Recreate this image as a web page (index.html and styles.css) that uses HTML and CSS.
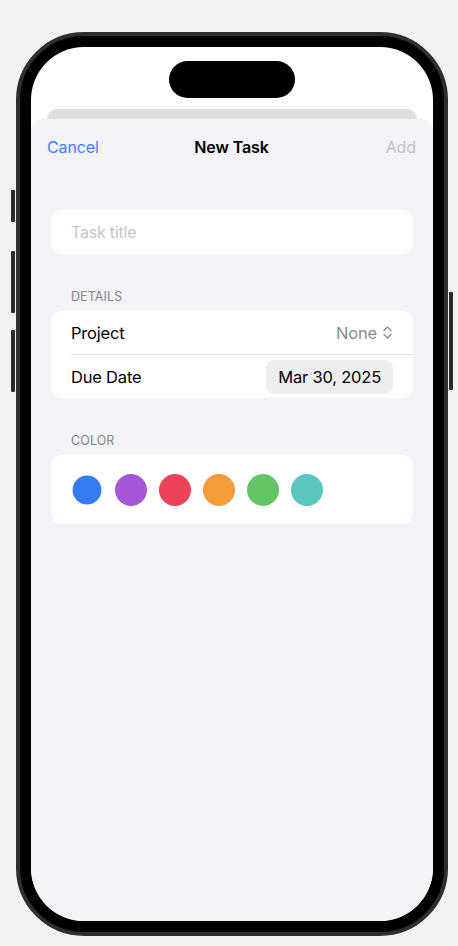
FILE: index.html
```html
<!DOCTYPE html>
<html lang="en">
<head>
<meta charset="utf-8">
<title>New Task</title>
<link rel="stylesheet" href="styles.css">
</head>
<body>
<div class="device">
  <span class="btn btn-action"></span>
  <span class="btn btn-vol-up"></span>
  <span class="btn btn-vol-down"></span>
  <span class="btn btn-power"></span>
  <div class="frame">
    <div class="screen">
      <div class="island"></div>
      <div class="status-area"></div>
      <div class="back-card"></div>
      <div class="sheet">
        <div class="nav">
          <span class="nav-cancel">Cancel</span>
          <span class="nav-title">New Task</span>
          <span class="nav-add">Add</span>
        </div>
        <div class="form">
          <div class="card field">
            <span class="placeholder">Task title</span>
          </div>

          <div class="section-label">DETAILS</div>
          <div class="card">
            <div class="row">
              <span class="row-label">Project</span>
              <span class="picker">None
                <svg class="updown" width="9" height="13" viewBox="0 0 9 13" fill="none" stroke="#8a8a8e" stroke-width="1.4" stroke-linecap="round" stroke-linejoin="round"><path d="M1 4.5 L4.5 1 L8 4.5"/><path d="M1 8.5 L4.5 12 L8 8.5"/></svg>
              </span>
            </div>
            <div class="divider"></div>
            <div class="row">
              <span class="row-label">Due Date</span>
              <span class="date-pill">Mar 30, 2025</span>
            </div>
          </div>

          <div class="section-label">COLOR</div>
          <div class="card swatches">
            <span class="swatch selected" style="background:#367bf6"></span>
            <span class="swatch" style="background:#a457d7"></span>
            <span class="swatch" style="background:#ea435a"></span>
            <span class="swatch" style="background:#f39c39"></span>
            <span class="swatch" style="background:#65c466"></span>
            <span class="swatch" style="background:#5bc6bd"></span>
          </div>
        </div>
      </div>
    </div>
  </div>
</div>
</body>
</html>
```

FILE: styles.css
```css
* { box-sizing: border-box; }

html, body {
  margin: 0;
  padding: 0;
}

body {
  width: 458px;
  height: 946px;
  background: #f2f2f2;
  font-family: "Inter", "Roboto", "Noto Sans", sans-serif;
  overflow: hidden;
}

.device {
  position: relative;
  width: 432px;
  height: 904px;
  margin: 32px 0 0 16px;
}

.btn {
  position: absolute;
  width: 4px;
  background: #2c2c2c;
  border-radius: 1px;
}
.btn-action { left: -5px; top: 158px; height: 32px; }
.btn-vol-up { left: -5px; top: 219px; height: 62px; }
.btn-vol-down { left: -5px; top: 298px; height: 62px; }
.btn-power { right: -5px; top: 260px; height: 98px; }

.frame {
  width: 100%;
  height: 100%;
  background: #000;
  border: 4px solid #2e2e2e;
  border-radius: 68px;
  padding: 11px;
}

.screen {
  position: relative;
  width: 100%;
  height: 100%;
  border-radius: 53px;
  overflow: hidden;
  background: #fff;
  display: flex;
  flex-direction: column;
}

.island {
  position: absolute;
  top: 14px;
  left: 50%;
  margin-left: -63px;
  width: 126px;
  height: 37px;
  border-radius: 19px;
  background: #000;
}

.status-area {
  height: 62px;
  flex: none;
}

.back-card {
  height: 10px;
  margin: 0 16px;
  background: #dedede;
  border-radius: 10px 10px 0 0;
  flex: none;
}

.sheet {
  flex: 1;
  background: #f2f2f7;
  border-radius: 12px 12px 0 0;
  display: flex;
  flex-direction: column;
}

.nav {
  height: 56px;
  padding: 0 17px 0 16px;
  display: grid;
  grid-template-columns: 1fr auto 1fr;
  align-items: center;
  font-size: 16px;
  letter-spacing: -0.1px;
}
.nav-cancel { color: #3a82f7; justify-self: start; }
.nav-title { color: #000; font-weight: 600; justify-self: center; }
.nav-add { color: #c2c2c6; justify-self: end; }

.form {
  padding: 35px 20px 0;
  display: flex;
  flex-direction: column;
}

.card {
  background: #fff;
  border-radius: 11px;
}

.field {
  height: 44px;
  padding: 0 20px;
  display: flex;
  align-items: center;
}
.placeholder {
  font-size: 16px;
  color: #c5c5c8;
  letter-spacing: -0.2px;
}

.section-label {
  margin-top: 34px;
  margin-bottom: 5px;
  height: 18px;
  line-height: 18px;
  padding: 0 20px;
  font-size: 12.5px;
  color: #86868b;
  letter-spacing: 0.1px;
}

.row {
  height: 43px;
  padding: 0 20px;
  display: flex;
  align-items: center;
  justify-content: space-between;
  font-size: 16.5px;
  letter-spacing: -0.2px;
}
.row-label { color: #000; }

.divider {
  height: 1px;
  margin-left: 20px;
  background: #e4e4e7;
}

.picker {
  display: flex;
  align-items: center;
  gap: 6px;
  color: #8a8a8e;
  margin-right: 1px;
}
.updown { display: block; }

.date-pill {
  height: 34px;
  padding: 0 12px;
  display: flex;
  align-items: center;
  background: #eeeef0;
  border-radius: 8px;
  color: #000;
}

.swatches {
  height: 69px;
  padding: 0 20px;
  display: flex;
  align-items: center;
  gap: 12px;
}
.swatch {
  width: 32px;
  height: 32px;
  border-radius: 50%;
  flex: none;
}
.swatch.selected {
  transform: scale(0.9);
}
```
